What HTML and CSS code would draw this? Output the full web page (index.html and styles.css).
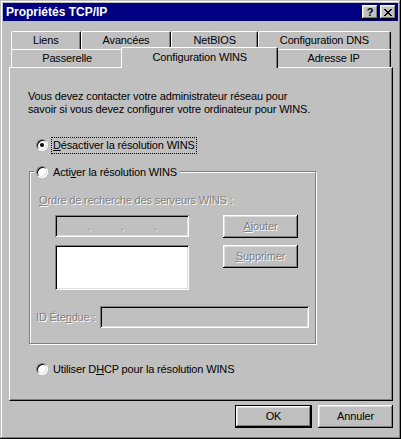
FILE: index.html
```html
<!DOCTYPE html>
<html lang="fr">
<head>
  <meta charset="UTF-8" />
  <title>Propriétés TCP/IP</title>
  <link rel="stylesheet" href="styles.css">
</head>
<body>
  <div class="window">
    <div class="titlebar">
      <span class="title">Propriétés TCP/IP</span>
      <div class="caption-btns">
        <span class="cap-btn">?</span>
        <span class="cap-btn">
          <svg width="8" height="7" viewBox="0 0 8 7"><path d="M0 0h2v1H0zM6 0h2v1H6zM1 1h2v1H1zM5 1h2v1H5zM2 2h4v1H2zM3 3h2v1H3zM2 4h4v1H2zM1 5h2v1H1zM5 5h2v1H5zM0 6h2v1H0zM6 6h2v1H6z" fill="#000"/></svg>
        </span>
      </div>
    </div>

    <div class="content">
      <!-- two rows of tabs, front row holds the active one -->
      <div class="tabs">
        <div class="tab-row">
          <div class="tab">Liens</div>
          <div class="tab">Avancées</div>
          <div class="tab">NetBIOS</div>
          <div class="tab">Configuration DNS</div>
        </div>
        <div class="tab-row">
          <div class="tab">Passerelle</div>
          <div class="tab active">Configuration WINS</div>
          <div class="tab">Adresse IP</div>
        </div>
      </div>

      <div class="panel">
        <p class="intro">Vous devez contacter votre administrateur réseau pour<br>savoir si vous devez configurer votre ordinateur pour WINS.</p>

        <div class="option first">
          <span class="radio checked"></span>
          <span class="focus"><u>D</u>ésactiver la résolution WINS</span>
        </div>

        <div class="group">
          <div class="group-legend">
            <span class="radio"></span>
            <span>Acti<u>v</u>er la résolution WINS</span>
          </div>

          <div class="disabled servers-label"><u>O</u>rdre de recherche des serveurs WINS :</div>

          <div class="servers">
            <div class="server-fields">
              <div class="field ip-field">
                <span class="octet"></span><span class="dot disabled">.</span>
                <span class="octet"></span><span class="dot disabled">.</span>
                <span class="octet"></span><span class="dot disabled">.</span>
                <span class="octet"></span>
              </div>
              <div class="field listbox"></div>
            </div>
            <div class="server-btns">
              <span class="btn disabled"><u>A</u>jouter</span>
              <span class="btn disabled"><u>S</u>upprimer</span>
            </div>
          </div>

          <div class="scope-row">
            <span class="disabled">ID Éte<u>n</u>due :</span>
            <span class="field scope-field"></span>
          </div>
        </div>

        <div class="option last">
          <span class="radio"></span>
          <span>Utiliser D<u>H</u>CP pour la résolution WINS</span>
        </div>
      </div>

      <div class="footer">
        <span class="btn default">OK</span>
        <span class="btn">Annuler</span>
      </div>
    </div>
  </div>
</body>
</html>
```

FILE: styles.css
```css
* {
  box-sizing: border-box;
}
body {
  margin: 0;
  font-family: "Liberation Sans", Arial, sans-serif;
  font-size: 11px;
  line-height: 13px;
  letter-spacing: -0.15px;
  color: #000;
  background: #c0c0c0;
}
u {
  text-underline-offset: 1px;
}
.window {
  width: 401px;
  height: 439px;
  padding: 3px;
  background: #c0c0c0;
  box-shadow: inset -1px -1px 0 #000, inset 1px 1px 0 #c0c0c0, inset -2px -2px 0 #808080, inset 2px 2px 0 #fff;
}
.titlebar {
  height: 18px;
  background: #000080;
  color: #fff;
  display: flex;
  align-items: center;
  justify-content: space-between;
  padding: 0 2px 0 3px;
}
.title {
  font-size: 12px;
  font-weight: bold;
  letter-spacing: 0;
}
.caption-btns {
  display: flex;
  gap: 2px;
}
.cap-btn {
  width: 16px;
  height: 14px;
  background: #c0c0c0;
  color: #000;
  font-weight: bold;
  display: flex;
  align-items: center;
  justify-content: center;
  box-shadow: inset -1px -1px 0 #000, inset 1px 1px 0 #fff, inset -2px -2px 0 #808080, inset 2px 2px 0 #dfdfdf;
}
.content {
  padding: 10px 5px 0 6px;
}

/* tabs */
.tabs {
  padding: 0 2px;
}
.tab-row {
  display: flex;
  height: 18px;
}
.tab {
  flex: 1 1 auto;
  padding: 0 6px;
  display: flex;
  align-items: center;
  justify-content: center;
  white-space: nowrap;
  background: #c0c0c0;
  border-left: 1px solid #fff;
  border-top: 1px solid #fff;
  border-right: 1px solid #000;
  border-radius: 2px 2px 0 0;
  box-shadow: inset -1px 0 0 #808080;
}
.tab.active {
  height: 21px;
  margin: -2px -2px -1px;
  position: relative;
  z-index: 1;
  padding-bottom: 2px;
}

/* page of the active tab */
.panel {
  height: 334px;
  border-left: 1px solid #fff;
  border-top: 1px solid #fff;
  border-right: 1px solid #000;
  border-bottom: 1px solid #000;
  box-shadow: inset -1px -1px 0 #808080;
  padding: 22px 0 0 18px;
}
.intro {
  margin: 0;
}
.option {
  display: flex;
  align-items: center;
  gap: 4px;
  height: 16px;
  margin-left: 8px;
}
.option.first {
  margin-top: 21px;
}
.option.last {
  margin-top: 17px;
}
.option span:last-child {
  padding-left: 1px;
}
.focus {
  outline: 1px dotted #000;
  outline-offset: 0;
  padding: 1px 1px 1px 0;
  line-height: 13px;
}
.radio {
  width: 12px;
  height: 12px;
  flex: none;
  border-radius: 50%;
  border: 1px solid;
  border-color: #808080 #fff #fff #808080;
  background: #fff;
  box-shadow: inset 1px 1px 0 #000, inset -1px -1px 0 #dfdfdf;
  display: flex;
  align-items: center;
  justify-content: center;
}
.radio.checked::after {
  content: "";
  width: 4px;
  height: 4px;
  border-radius: 50%;
  background: #000;
}

/* group box */
.group {
  width: 287px;
  height: 173px;
  margin: 18px 0 0 1px;
  padding-right: 6px;
  border: 1px solid #808080;
  box-shadow: 1px 1px 0 #fff, inset 1px 1px 0 #fff;
}
.group-legend {
  display: flex;
  align-items: center;
  gap: 4px;
  width: max-content;
  height: 16px;
  margin: -8px 0 0 4px;
  padding: 0 3px 0 2px;
  background: #c0c0c0;
}
.group-legend span:last-child {
  padding-left: 1px;
}
.disabled {
  color: #808080;
  text-shadow: 1px 1px 0 #fff;
}
.servers-label {
  margin: 14px 0 0 9px;
}
.servers {
  display: flex;
  gap: 34px;
  margin: 8px 0 0 25px;
}
.server-fields {
  width: 134px;
  display: flex;
  flex-direction: column;
  gap: 8px;
}
.field {
  background: #c0c0c0;
  box-shadow: inset 1px 1px 0 #808080, inset -1px -1px 0 #fff, inset 2px 2px 0 #000, inset -2px -2px 0 #dfdfdf;
}
.ip-field {
  height: 22px;
  display: flex;
  align-items: center;
  padding: 0 2px;
}
.octet {
  flex: 1;
}
.dot {
  width: 2px;
  text-align: center;
}
.listbox {
  height: 45px;
  background: #fff;
}
.server-btns {
  display: flex;
  flex-direction: column;
  gap: 7px;
}
.btn {
  width: 75px;
  height: 23px;
  display: flex;
  align-items: center;
  justify-content: center;
  background: #c0c0c0;
  box-shadow: inset -1px -1px 0 #000, inset 1px 1px 0 #fff, inset -2px -2px 0 #808080, inset 2px 2px 0 #dfdfdf;
}
.btn.default {
  width: 77px;
  height: 23px;
  border: 1px solid #000;
}
.scope-row {
  display: flex;
  align-items: center;
  margin: 16px 0 0 6px;
}
.scope-field {
  width: 209px;
  height: 22px;
  margin-left: auto;
}
.footer {
  display: flex;
  justify-content: flex-end;
  gap: 6px;
  padding-top: 4px;
}
```
